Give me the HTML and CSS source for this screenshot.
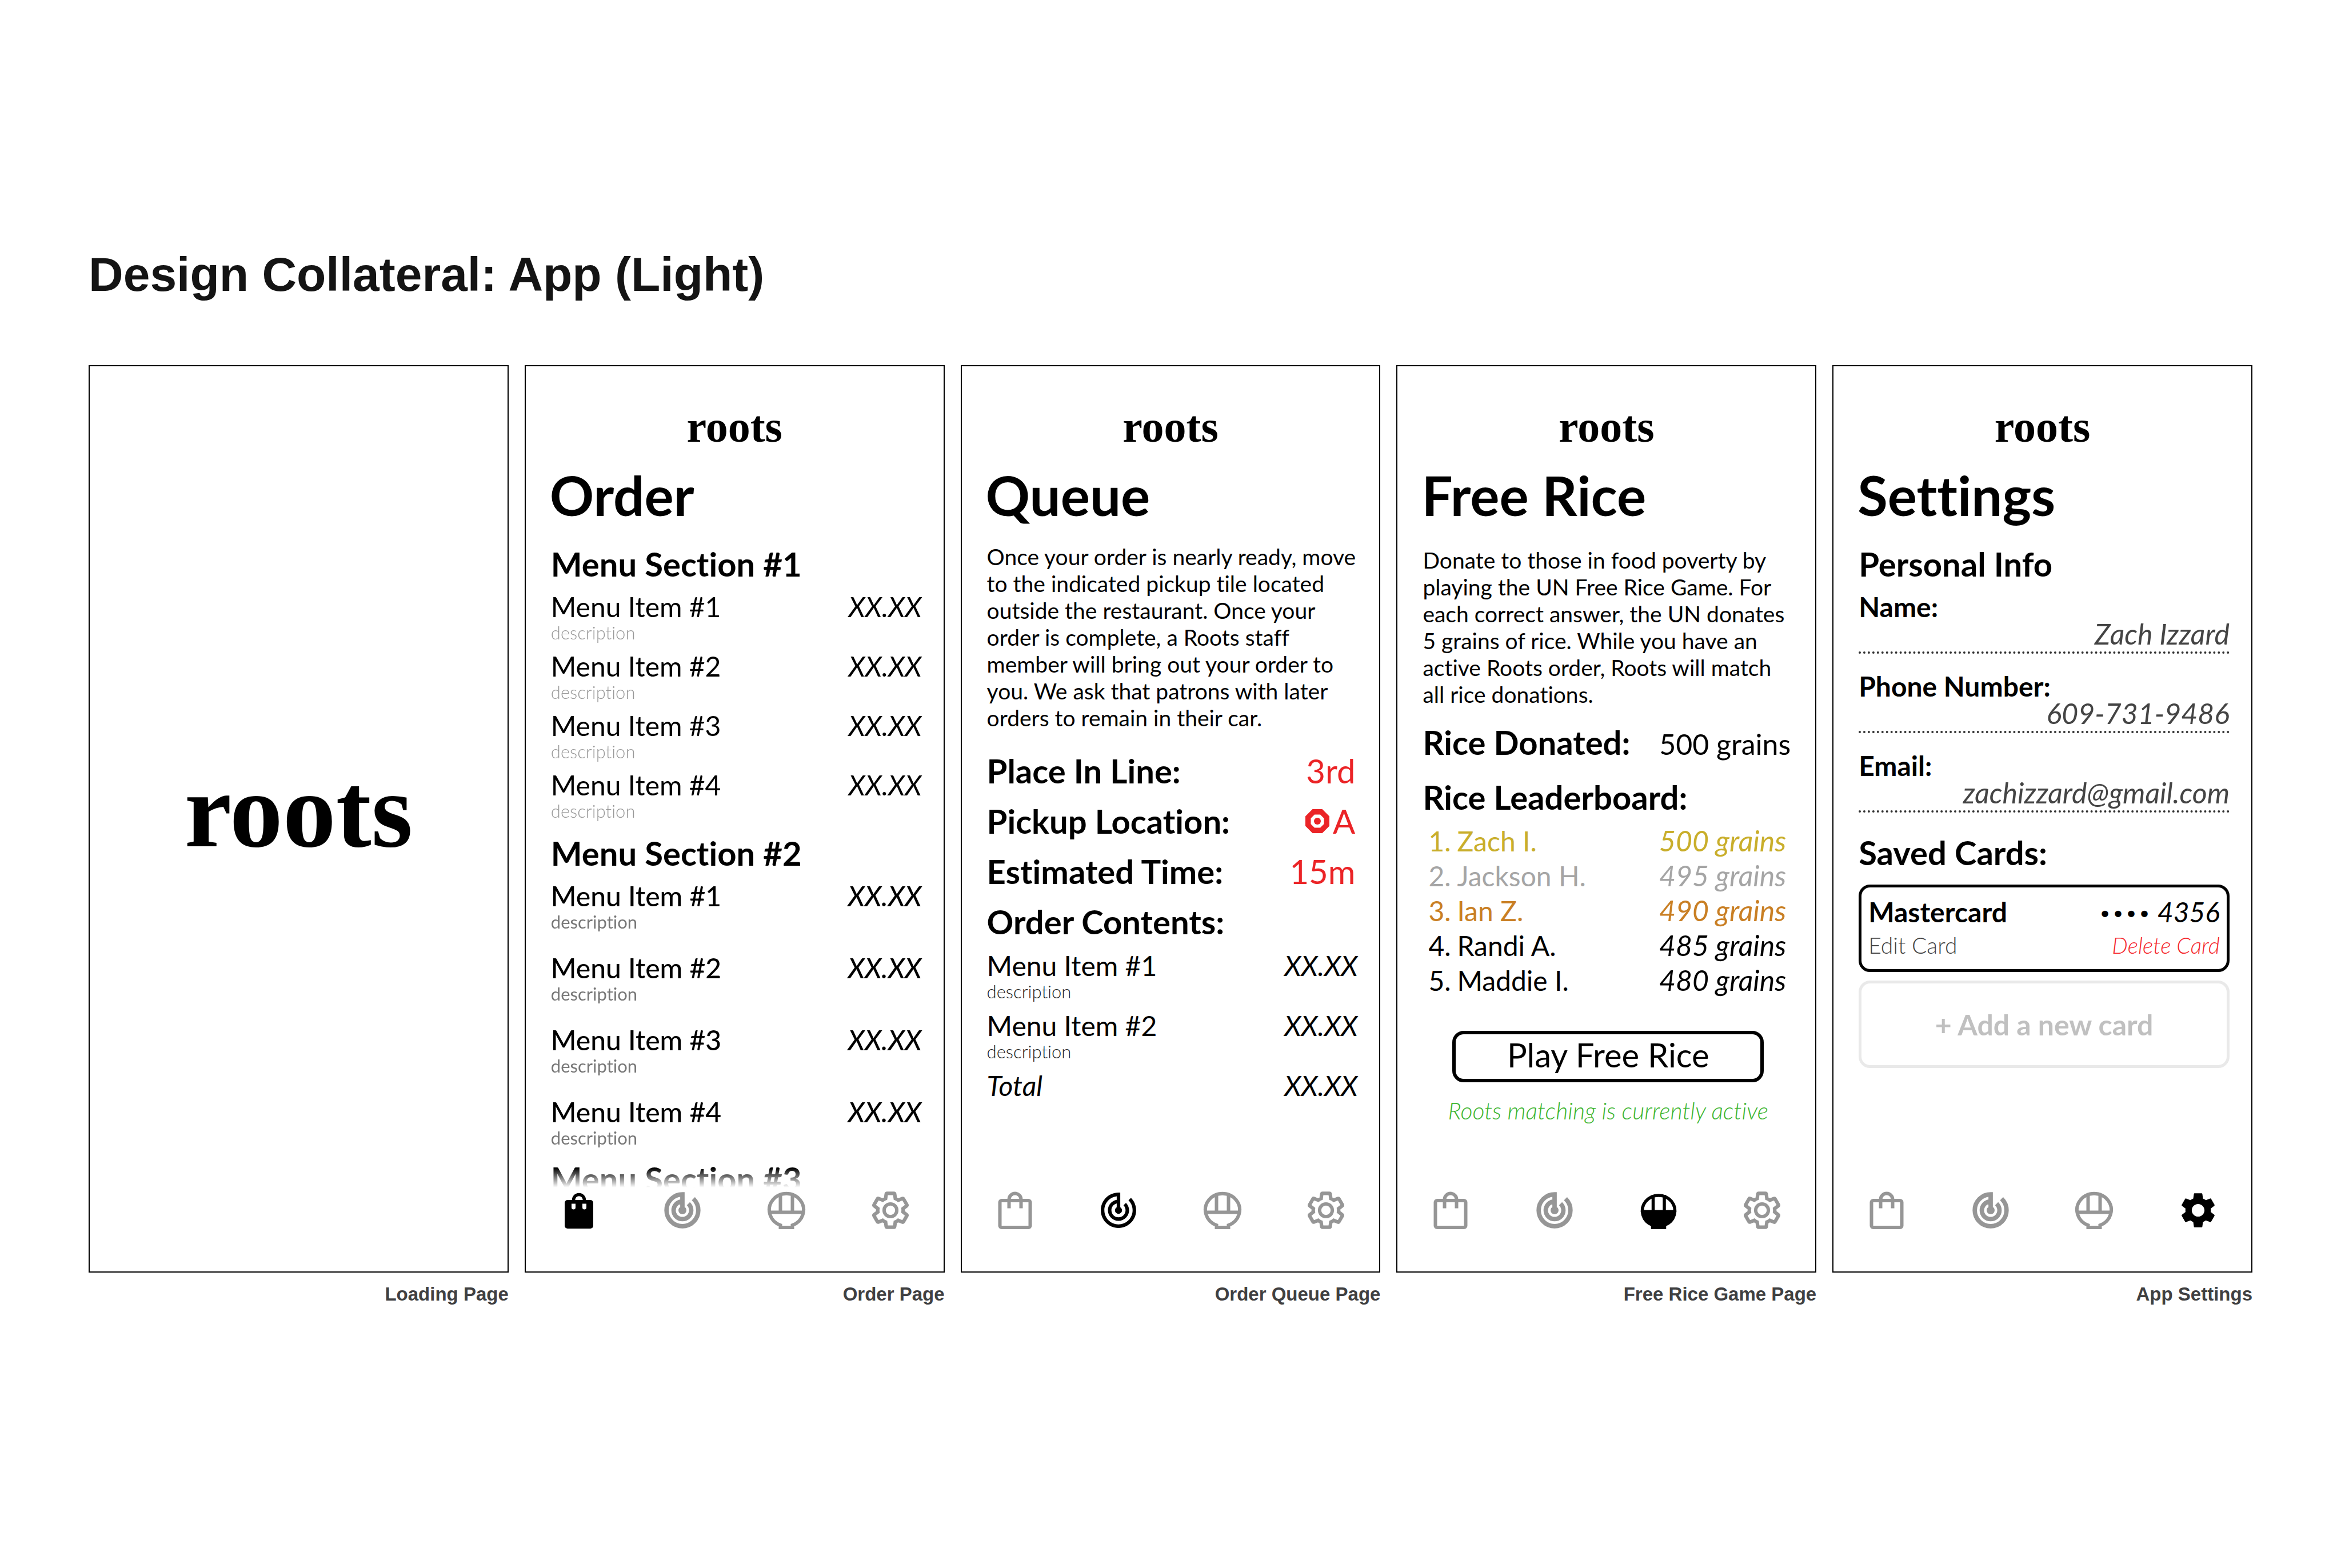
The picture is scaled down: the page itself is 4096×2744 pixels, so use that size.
FILE: index.html
```html
<!DOCTYPE html>
<html lang="en">
<head>
<meta charset="utf-8">
<meta name="viewport" content="width=device-width, initial-scale=1">
<title>Design Collateral: App (Light)</title>
<link rel="stylesheet" href="styles.css">
</head>
<body>
<svg class="sprite" aria-hidden="true">
  <symbol id="bag" viewBox="0 0 72 72">
    <rect x="9.500" y="19" width="53" height="47" rx="3" fill="none" stroke="currentColor" stroke-width="6"/>
    <path d="M25.500 32.500V17a10.500 10.500 0 0 1 21 0V32.500" fill="none" stroke="currentColor" stroke-width="6"/>
  </symbol>
  <symbol id="bag-on" viewBox="0 0 72 72">
    <rect x="11" y="18" width="50" height="50" rx="5" fill="currentColor"/>
    <path d="M26.500 20V18a9.500 9.500 0 0 1 19 0V20" fill="none" stroke="currentColor" stroke-width="5.500"/>
    <path d="M23 24.500h7V31a3.500 3.500 0 0 1-7 0zM42 24.500h7V31a3.500 3.500 0 0 1-7 0z" fill="#fff"/>
  </symbol>
  <symbol id="track" viewBox="0.35 0.35 23.3 23.3">
    <path fill="currentColor" stroke="currentColor" stroke-width="0.500" d="M19.070 4.930l-1.410 1.410C19.100 7.790 20 9.790 20 12c0 4.420-3.580 8-8 8s-8-3.580-8-8c0-4.080 3.050-7.440 7-7.930v2.020C8.160 6.570 6 9.030 6 12c0 3.310 2.690 6 6 6s6-2.690 6-6c0-1.660-.67-3.160-1.760-4.240l-1.410 1.410C15.550 9.900 16 10.900 16 12c0 2.210-1.790 4-4 4s-4-1.790-4-4c0-1.860 1.280-3.410 3-3.860v2.140c-.6.35-1 .98-1 1.720 0 1.100.9 2 2 2s2-.9 2-2c0-.74-.4-1.380-1-1.720V2h-1C6.480 2 2 6.480 2 12s4.480 10 10 10 10-4.480 10-10c0-2.760-1.120-5.260-2.930-7.070z"/>
  </symbol>
  <symbol id="track-on" viewBox="0.35 0.35 23.3 23.3">
    <path fill="currentColor" d="M19.070 4.930l-1.410 1.410C19.100 7.790 20 9.790 20 12c0 4.420-3.580 8-8 8s-8-3.580-8-8c0-4.080 3.050-7.440 7-7.930v2.020C8.160 6.570 6 9.030 6 12c0 3.310 2.690 6 6 6s6-2.690 6-6c0-1.660-.67-3.160-1.760-4.240l-1.410 1.410C15.550 9.900 16 10.900 16 12c0 2.210-1.790 4-4 4s-4-1.790-4-4c0-1.860 1.280-3.410 3-3.860v2.140c-.6.35-1 .98-1 1.720 0 1.100.9 2 2 2s2-.9 2-2c0-.74-.4-1.380-1-1.720V2h-1C6.480 2 2 6.480 2 12s4.480 10 10 10 10-4.480 10-10c0-2.760-1.120-5.260-2.930-7.070z"/>
  </symbol>
  <symbol id="bowl" viewBox="0 0 72 72">
    <path d="M25.500 66V62A30 28.500 0 1 1 46.500 62V66ZM6 39.500H66M25.500 8V39.500M46.500 8V39.500" fill="none" stroke="currentColor" stroke-width="6"/>
  </symbol>
  <symbol id="bowl-on" viewBox="0 0 72 72">
    <path d="M25.500 66V62A28.500 27 0 1 1 46.500 62V66ZM26.500 9V38M46 9V38" fill="none" stroke="currentColor" stroke-width="5.500"/>
    <path d="M6 35.500H66C65 49 58 57 49 62V68.500H23V62C14 57 7 49 6 35.500Z" fill="currentColor"/>
  </symbol>
  <symbol id="gear" viewBox="0.35 0.35 23.3 23.3">
    <path fill="none" stroke="currentColor" stroke-width="2" d="M19.140 12.940c.04-.3.06-.61.06-.94 0-.32-.02-.64-.07-.94l2.030-1.580c.18-.14.23-.41.12-.61l-1.920-3.320c-.12-.22-.37-.29-.59-.22l-2.390.96c-.5-.38-1.030-.7-1.620-.94l-.36-2.540c-.04-.24-.24-.41-.48-.41h-3.840c-.24 0-.43.17-.47.41l-.36 2.540c-.59.24-1.130.57-1.620.94l-2.390-.96c-.22-.08-.47 0-.59.22L2.740 8.870c-.12.21-.08.47.12.61l2.030 1.580c-.05.3-.09.63-.09.94s.02.64.07.94l-2.030 1.580c-.18.14-.23.41-.12.61l1.920 3.320c.12.22.37.29.59.22l2.390-.96c.5.38 1.030.7 1.620.94l.36 2.540c.05.24.24.41.48.41h3.840c.24 0 .44-.17.47-.41l.36-2.540c.59-.24 1.130-.56 1.620-.94l2.390.96c.22.08.47 0 .59-.22l1.920-3.320c.12-.22.07-.47-.12-.61z"/>
    <circle cx="12" cy="12" r="3.600" fill="none" stroke="currentColor" stroke-width="1.900"/>
  </symbol>
  <symbol id="gear-on" viewBox="0.35 0.35 23.3 23.3">
    <path fill="currentColor" d="M19.140 12.940c.04-.3.06-.61.06-.94 0-.32-.02-.64-.07-.94l2.030-1.580c.18-.14.23-.41.12-.61l-1.920-3.320c-.12-.22-.37-.29-.59-.22l-2.390.96c-.5-.38-1.030-.7-1.620-.94l-.36-2.540c-.04-.24-.24-.41-.48-.41h-3.840c-.24 0-.43.17-.47.41l-.36 2.540c-.59.24-1.130.57-1.620.94l-2.390-.96c-.22-.08-.47 0-.59.22L2.740 8.870c-.12.21-.08.47.12.61l2.030 1.580c-.05.3-.09.63-.09.94s.02.64.07.94l-2.030 1.580c-.18.14-.23.41-.12.61l1.920 3.320c.12.22.37.29.59.22l2.390-.96c.5.38 1.030.7 1.620.94l.36 2.540c.05.24.24.41.48.41h3.840c.24 0 .44-.17.47-.41l.36-2.540c.59-.24 1.130-.56 1.620-.94l2.390.96c.22.08.47 0 .59-.22l1.920-3.320c.12-.22.07-.47-.12-.61l-2.010-1.580zM12 15.600c-1.980 0-3.600-1.620-3.600-3.600s1.620-3.600 3.600-3.600 3.600 1.620 3.600 3.600-1.620 3.600-3.600 3.600z"/>
  </symbol>
</svg>

<main class="board">
  <h1 class="board-title">Design Collateral: App (Light)</h1>
  <div class="screens">

    <figure class="screen">
      <div class="phone phone-loading"><p class="logo logo-large">roots</p></div>
      <figcaption class="caption">Loading Page</figcaption>
    </figure>

    <figure class="screen">
      <div class="phone">
        <p class="logo">roots</p>
        <h2 class="title">Order</h2>
        <div class="content content-scroll">
          <h3 class="heading">Menu Section #1</h3>
          <ul class="menu">
            <li class="item"><span>Menu Item #1</span><span class="price">XX.XX</span><small class="desc">description</small></li>
            <li class="item"><span>Menu Item #2</span><span class="price">XX.XX</span><small class="desc">description</small></li>
            <li class="item"><span>Menu Item #3</span><span class="price">XX.XX</span><small class="desc">description</small></li>
            <li class="item"><span>Menu Item #4</span><span class="price">XX.XX</span><small class="desc">description</small></li>
          </ul>
          <h3 class="heading">Menu Section #2</h3>
          <ul class="menu menu-roomy">
            <li class="item"><span>Menu Item #1</span><span class="price">XX.XX</span><small class="desc">description</small></li>
            <li class="item"><span>Menu Item #2</span><span class="price">XX.XX</span><small class="desc">description</small></li>
            <li class="item"><span>Menu Item #3</span><span class="price">XX.XX</span><small class="desc">description</small></li>
            <li class="item"><span>Menu Item #4</span><span class="price">XX.XX</span><small class="desc">description</small></li>
          </ul>
          <h3 class="heading">Menu Section #3</h3>
        </div>
        <nav class="tabs" aria-label="Order tabs">
          <a class="tab tab-active" href="#order" aria-label="Order"><svg class="icon"><use href="#bag-on"/></svg></a>
          <a class="tab" href="#queue" aria-label="Queue"><svg class="icon"><use href="#track"/></svg></a>
          <a class="tab" href="#rice" aria-label="Free Rice"><svg class="icon"><use href="#bowl"/></svg></a>
          <a class="tab" href="#settings" aria-label="Settings"><svg class="icon"><use href="#gear"/></svg></a>
        </nav>
      </div>
      <figcaption class="caption">Order Page</figcaption>
    </figure>

    <figure class="screen">
      <div class="phone">
        <p class="logo">roots</p>
        <h2 class="title">Queue</h2>
        <div class="content">
          <p class="copy copy-queue">Once your order is nearly ready, move<br>to the indicated pickup tile located<br>outside the restaurant. Once your<br>order is complete, a Roots staff<br>member will bring out your order to<br>you. We ask that patrons with later<br>orders to remain in their car.</p>
          <dl class="status">
            <div class="status-row"><dt>Place In Line:</dt><dd class="status-value">3rd</dd></div>
            <div class="status-row"><dt>Pickup Location:</dt><dd class="status-value"><svg class="tile" viewBox="0 0 42 42" aria-hidden="true"><path fill="currentColor" fill-rule="evenodd" d="M12.500 0h17L42 12.500v17L29.500 42h-17L0 29.500v-17ZM16 9.500 9.500 16v10l6.500 6.500h10l6.500-6.500V16L26 9.500Z"/><circle cx="21" cy="21" r="6" fill="currentColor"/></svg>A</dd></div>
            <div class="status-row"><dt>Estimated Time:</dt><dd class="status-value">15m</dd></div>
          </dl>
          <h3 class="heading heading-contents">Order Contents:</h3>
          <ul class="menu menu-order">
            <li class="item"><span>Menu Item #1</span><span class="price">XX.XX</span><small class="desc">description</small></li>
            <li class="item"><span>Menu Item #2</span><span class="price">XX.XX</span><small class="desc">description</small></li>
            <li class="item"><em>Total</em><span class="price">XX.XX</span></li>
          </ul>
        </div>
        <nav class="tabs" aria-label="Queue tabs">
          <a class="tab" href="#order" aria-label="Order"><svg class="icon"><use href="#bag"/></svg></a>
          <a class="tab tab-active" href="#queue" aria-label="Queue"><svg class="icon"><use href="#track-on"/></svg></a>
          <a class="tab" href="#rice" aria-label="Free Rice"><svg class="icon"><use href="#bowl"/></svg></a>
          <a class="tab" href="#settings" aria-label="Settings"><svg class="icon"><use href="#gear"/></svg></a>
        </nav>
      </div>
      <figcaption class="caption">Order Queue Page</figcaption>
    </figure>

    <figure class="screen">
      <div class="phone">
        <p class="logo">roots</p>
        <h2 class="title">Free Rice</h2>
        <div class="content">
          <p class="copy copy-rice">Donate to those in food poverty by<br>playing the UN Free Rice Game. For<br>each correct answer, the UN donates<br>5 grains of rice. While you have an<br>active Roots order, Roots will match<br>all rice donations.</p>
          <p class="donated"><strong class="donated-label">Rice Donated:</strong><span class="donated-value">500 grains</span></p>
          <h3 class="heading heading-leaders">Rice Leaderboard:</h3>
          <table class="leaders">
            <tbody>
              <tr class="gold"><td class="rank">1.</td><td>Zach I.</td><td class="grains">500 grains</td></tr>
              <tr class="silver"><td class="rank">2.</td><td>Jackson H.</td><td class="grains">495 grains</td></tr>
              <tr class="bronze"><td class="rank">3.</td><td>Ian Z.</td><td class="grains">490 grains</td></tr>
              <tr><td class="rank">4.</td><td>Randi A.</td><td class="grains">485 grains</td></tr>
              <tr><td class="rank">5.</td><td>Maddie I.</td><td class="grains">480 grains</td></tr>
            </tbody>
          </table>
          <button class="play" type="button">Play Free Rice</button>
          <p class="matching">Roots matching is currently active</p>
        </div>
        <nav class="tabs" aria-label="Free Rice tabs">
          <a class="tab" href="#order" aria-label="Order"><svg class="icon"><use href="#bag"/></svg></a>
          <a class="tab" href="#queue" aria-label="Queue"><svg class="icon"><use href="#track"/></svg></a>
          <a class="tab tab-active" href="#rice" aria-label="Free Rice"><svg class="icon"><use href="#bowl-on"/></svg></a>
          <a class="tab" href="#settings" aria-label="Settings"><svg class="icon"><use href="#gear"/></svg></a>
        </nav>
      </div>
      <figcaption class="caption">Free Rice Game Page</figcaption>
    </figure>

    <figure class="screen">
      <div class="phone">
        <p class="logo">roots</p>
        <h2 class="title">Settings</h2>
        <div class="content">
          <h3 class="heading">Personal Info</h3>
          <form class="fields">
            <div class="field"><label class="label" for="name">Name:</label><input class="input" id="name" type="text" value="Zach Izzard"></div>
            <div class="field"><label class="label" for="phone">Phone Number:</label><input class="input" id="phone" type="tel" value="609-731-9486"></div>
            <div class="field"><label class="label" for="email">Email:</label><input class="input" id="email" type="email" value="zachizzard@gmail.com"></div>
          </form>
          <h3 class="heading heading-cards">Saved Cards:</h3>
          <div class="cards">
            <div class="card">
              <div class="card-line"><strong>Mastercard</strong><em><span class="dots">••••</span> 4356</em></div>
              <div class="card-line card-actions"><a class="edit" href="#edit">Edit Card</a><a class="delete" href="#delete">Delete Card</a></div>
            </div>
            <button class="add-card" type="button">+ Add a new card</button>
          </div>
        </div>
        <nav class="tabs" aria-label="Settings tabs">
          <a class="tab" href="#order" aria-label="Order"><svg class="icon"><use href="#bag"/></svg></a>
          <a class="tab" href="#queue" aria-label="Queue"><svg class="icon"><use href="#track"/></svg></a>
          <a class="tab" href="#rice" aria-label="Free Rice"><svg class="icon"><use href="#bowl"/></svg></a>
          <a class="tab tab-active" href="#settings" aria-label="Settings"><svg class="icon"><use href="#gear-on"/></svg></a>
        </nav>
      </div>
      <figcaption class="caption">App Settings</figcaption>
    </figure>

  </div>
</main>
</body>
</html>
```
FILE: styles.css
```css
*, *::before, *::after { box-sizing: border-box; }

body, h1, h2, h3, p, ul, dl, dd, figure { margin: 0; padding: 0; }

body {
  background: #fff;
  color: #000;
  font-family: Lato, "Open Sans", sans-serif;
  font-size: 48px;
  font-variant-ligatures: no-common-ligatures;
  line-height: 54px;
}

button, input { font: inherit; color: inherit; margin: 0; }
a { color: inherit; text-decoration: none; }
ul { list-style: none; }

.sprite { position: absolute; width: 0; height: 0; }

/* Board */
.board { padding: 424px 155px; }

.board-title {
  color: #141414;
  font: 700 84px/112px "Liberation Sans", Arial, sans-serif;
}

.screens {
  display: grid;
  grid-template-columns: repeat(5, minmax(0, 1fr));
  gap: 28px;
  margin-top: 103px;
}

.caption {
  margin-top: 18px;
  color: #404041;
  font: 700 33px/40px "Liberation Sans", Arial, sans-serif;
  text-align: right;
}

/* Phone frame */
.phone {
  display: flex;
  flex-direction: column;
  aspect-ratio: 735 / 1588;
  min-height: 0;
  padding-top: 68px;
  border: 2px solid #000;
}

.phone-loading { justify-content: center; padding: 0 0 30px; }

.logo {
  font: 700 78px/76px "Liberation Serif", "Times New Roman", serif;
  text-align: center;
}

.logo-large { font-size: 186px; line-height: 186px; }

.title {
  margin-top: 25px;
  padding-left: 42px;
  font-size: 96px;
  font-weight: 700;
  line-height: 112px;
}

.content { flex: 1; min-height: 0; padding: 0 38px 0 44px; }

.content-scroll {
  overflow: hidden;
  -webkit-mask-image: linear-gradient(to top, transparent 4px, #000 38px);
  mask-image: linear-gradient(to top, transparent 4px, #000 38px);
}

.heading {
  margin-top: 31px;
  font-size: 58px;
  font-weight: 700;
  line-height: 68px;
}

/* Menu lists */
.menu { display: grid; gap: 14px; margin-top: 14px; }
.menu-roomy { gap: 36px; font-weight: 500; }
.menu-order { gap: 15px; margin-top: 16px; }
.menu + .heading { margin-top: 22px; }
.menu-roomy + .heading { margin-top: 20px; }

.item { display: grid; grid-template-columns: 1fr auto; }
.price { font-style: italic; }

.desc {
  grid-column: 1 / -1;
  color: #999;
  font-size: 31px;
  font-weight: 300;
  line-height: 36px;
}

.menu-roomy .desc { color: #777; font-weight: 400; }
.menu-order .desc { color: #222; }

/* Copy */
.copy { font-size: 39px; line-height: 47px; }
.copy-queue { margin-top: 29px; }
.copy-rice { margin-top: 35px; }

/* Queue status */
.status { display: grid; gap: 20px; margin-top: 35px; }

.status-row {
  display: flex;
  justify-content: space-between;
  padding-right: 4px;
  font-size: 58px;
  font-weight: 700;
  line-height: 68px;
}

.status-value {
  display: flex;
  align-items: center;
  gap: 6px;
  color: #eb2427;
  font-weight: 400;
}

.tile { width: 42px; height: 42px; }
.heading-contents { margin-top: 20px; }

/* Free Rice */
.donated {
  display: flex;
  justify-content: space-between;
  align-items: baseline;
  margin-top: 26px;
  padding-right: 5px;
  line-height: 68px;
}

.donated-label { font-size: 58px; font-weight: 700; }
.donated-value { font-size: 50px; }
.heading-leaders { margin-top: 25px; }

.leaders {
  width: 100%;
  margin-top: 12px;
  border-collapse: collapse;
  line-height: 61px;
}

.leaders td { padding: 0; }
.leaders .rank { width: 60px; padding-left: 10px; }
.leaders .grains { padding-right: 13px; font-size: 50px; font-style: italic; text-align: right; }
.gold { color: #c9ae2b; }
.silver { color: #a5a5a5; }
.bronze { color: #c97f24; }

.play {
  display: block;
  width: 84%;
  margin: 58px auto 0;
  padding: 8px 0 14px;
  border: 6px solid #000;
  border-radius: 20px;
  background: #fff;
  font-size: 58px;
  line-height: 56px;
}

.matching {
  margin-top: 26px;
  color: #3cb52f;
  font-size: 41px;
  font-style: italic;
  font-weight: 300;
  line-height: 47px;
  text-align: center;
}

/* Settings */
.fields { display: grid; gap: 33px; margin-top: 17px; }
.field { display: grid; line-height: 48px; }
.label { justify-self: start; font-weight: 700; }

.input {
  width: 100%;
  height: 58px;
  padding: 0 0 8px;
  border: 0;
  border-bottom: 4px dotted #333;
  background: none;
  color: #444;
  font-size: 50px;
  font-style: italic;
  text-align: right;
}

.heading-cards { margin-top: 36px; }
.cards { display: grid; gap: 15px; margin-top: 22px; }

.card {
  display: grid;
  gap: 9px;
  padding: 16px 12px 20px;
  border: 5px solid #000;
  border-radius: 20px;
}

.card-line { display: flex; justify-content: space-between; }
.card-actions { font-size: 39px; font-weight: 300; line-height: 44px; }
.edit { color: #444; }
.delete { color: #f5282d; font-style: italic; }

.dots {
  font-family: "DejaVu Sans", sans-serif;
  font-size: 39px;
  font-style: normal;
  line-height: 1;
}

.add-card {
  height: 153px;
  border: 5px solid #e9e9e9;
  border-radius: 20px;
  background: #fff;
  color: #c0c0c0;
  font-size: 50px;
  font-weight: 700;
}

/* Tab bar */
.tabs { display: flex; justify-content: space-between; padding: 0 57px 71px; }
.tab { display: block; height: 72px; color: #969696; }
.tab-active { color: #000; }
.icon { display: block; width: 72px; height: 72px; }
```
